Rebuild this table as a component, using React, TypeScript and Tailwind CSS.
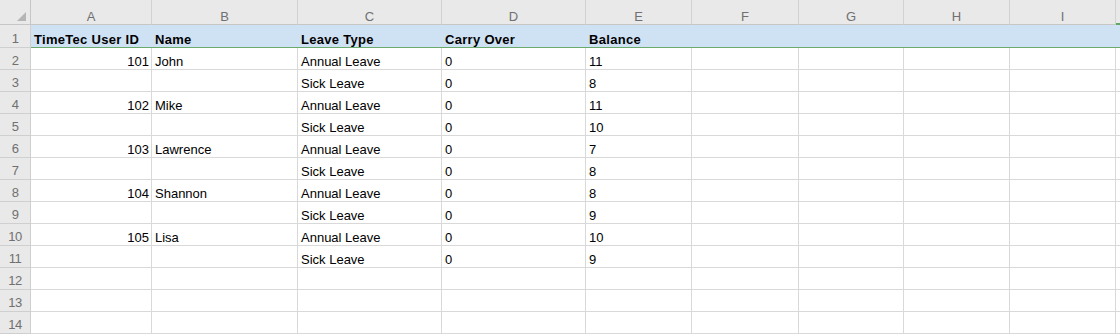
const font = "font-['Liberation_Sans',Arial,sans-serif]";

const columns = [
  { letter: 'A', width: 'w-[121px]' },
  { letter: 'B', width: 'w-[146px]' },
  { letter: 'C', width: 'w-[144px]' },
  { letter: 'D', width: 'w-[144px]' },
  { letter: 'E', width: 'w-[106px]' },
  { letter: 'F', width: 'w-[107px]' },
  { letter: 'G', width: 'w-[105px]' },
  { letter: 'H', width: 'w-[106px]' },
  { letter: 'I', width: 'w-[106px]' },
];

const headings = ['TimeTec User ID', 'Name', 'Leave Type', 'Carry Over', 'Balance'];

// id, name, leave type, carry over, balance
const rows: string[][] = [
  ['101', 'John', 'Annual Leave', '0', '11'],
  ['', '', 'Sick Leave', '0', '8'],
  ['102', 'Mike', 'Annual Leave', '0', '11'],
  ['', '', 'Sick Leave', '0', '10'],
  ['103', 'Lawrence', 'Annual Leave', '0', '7'],
  ['', '', 'Sick Leave', '0', '8'],
  ['104', 'Shannon', 'Annual Leave', '0', '8'],
  ['', '', 'Sick Leave', '0', '9'],
  ['105', 'Lisa', 'Annual Leave', '0', '10'],
  ['', '', 'Sick Leave', '0', '9'],
  [],
  [],
  [],
];

function RowNumber({ n }: { n: number }) {
  return (
    <div className="w-[31px] shrink-0 h-full flex items-end justify-center pb-[1px] bg-[#e9e9e9] border-r border-b border-[#cfcfcf] text-[13px] leading-[15px] tracking-[-0.5px] text-[#707070]">
      {n}
    </div>
  );
}

export default function App() {
  return (
    <div className={`w-[1120px] h-[336px] overflow-hidden bg-white text-black ${font}`}>
      {/* Column headers */}
      <div className="flex h-[25px]">
        <div className="w-[31px] shrink-0 relative bg-[#e9e9e9] border-r border-b border-[#c6c6c6]">
          <svg className="absolute right-[4px] bottom-[3px]" width="9" height="9" viewBox="0 0 9 9">
            <polygon points="9,0 9,9 0,9" fill="#b5b5b5" />
          </svg>
        </div>
        {columns.map((c) => (
          <div
            key={c.letter}
            className={`${c.width} shrink-0 flex items-end justify-center bg-[#e9e9e9] border-r border-b border-r-[#d2d2d2] border-b-[#c6c6c6] text-[13px] leading-[15px] text-[#707070]`}
          >
            {c.letter}
          </div>
        ))}
        <div className="flex-1 bg-[#e9e9e9] border-b-2 border-[#5fa864]" />
      </div>

      {/* Row 1: headings */}
      <div className="flex h-[23px]">
        <RowNumber n={1} />
        <div className="flex flex-1 bg-[#cfe2f3] border-b border-[#6aab6c]">
          {columns.map((c, i) => (
            <div
              key={c.letter}
              className={`${c.width} shrink-0 flex items-end px-[3px] text-[13px] leading-[15px] font-bold tracking-[0.3px] whitespace-nowrap`}
            >
              {headings[i] ?? ''}
            </div>
          ))}
        </div>
      </div>

      {/* Data rows */}
      {rows.map((r, ri) => (
        <div key={ri} className="flex h-[22px]">
          <RowNumber n={ri + 2} />
          {columns.map((c, ci) => (
            <div
              key={c.letter}
              className={`${c.width} shrink-0 flex items-end ${ci === 0 ? 'justify-end pr-[2px]' : 'pl-[3px]'} border-r border-b border-[#d9d9d9] text-[13px] leading-[15px] whitespace-nowrap`}
            >
              {r[ci] ?? ''}
            </div>
          ))}
          <div className="flex-1 border-b border-[#d9d9d9]" />
        </div>
      ))}
    </div>
  );
}
